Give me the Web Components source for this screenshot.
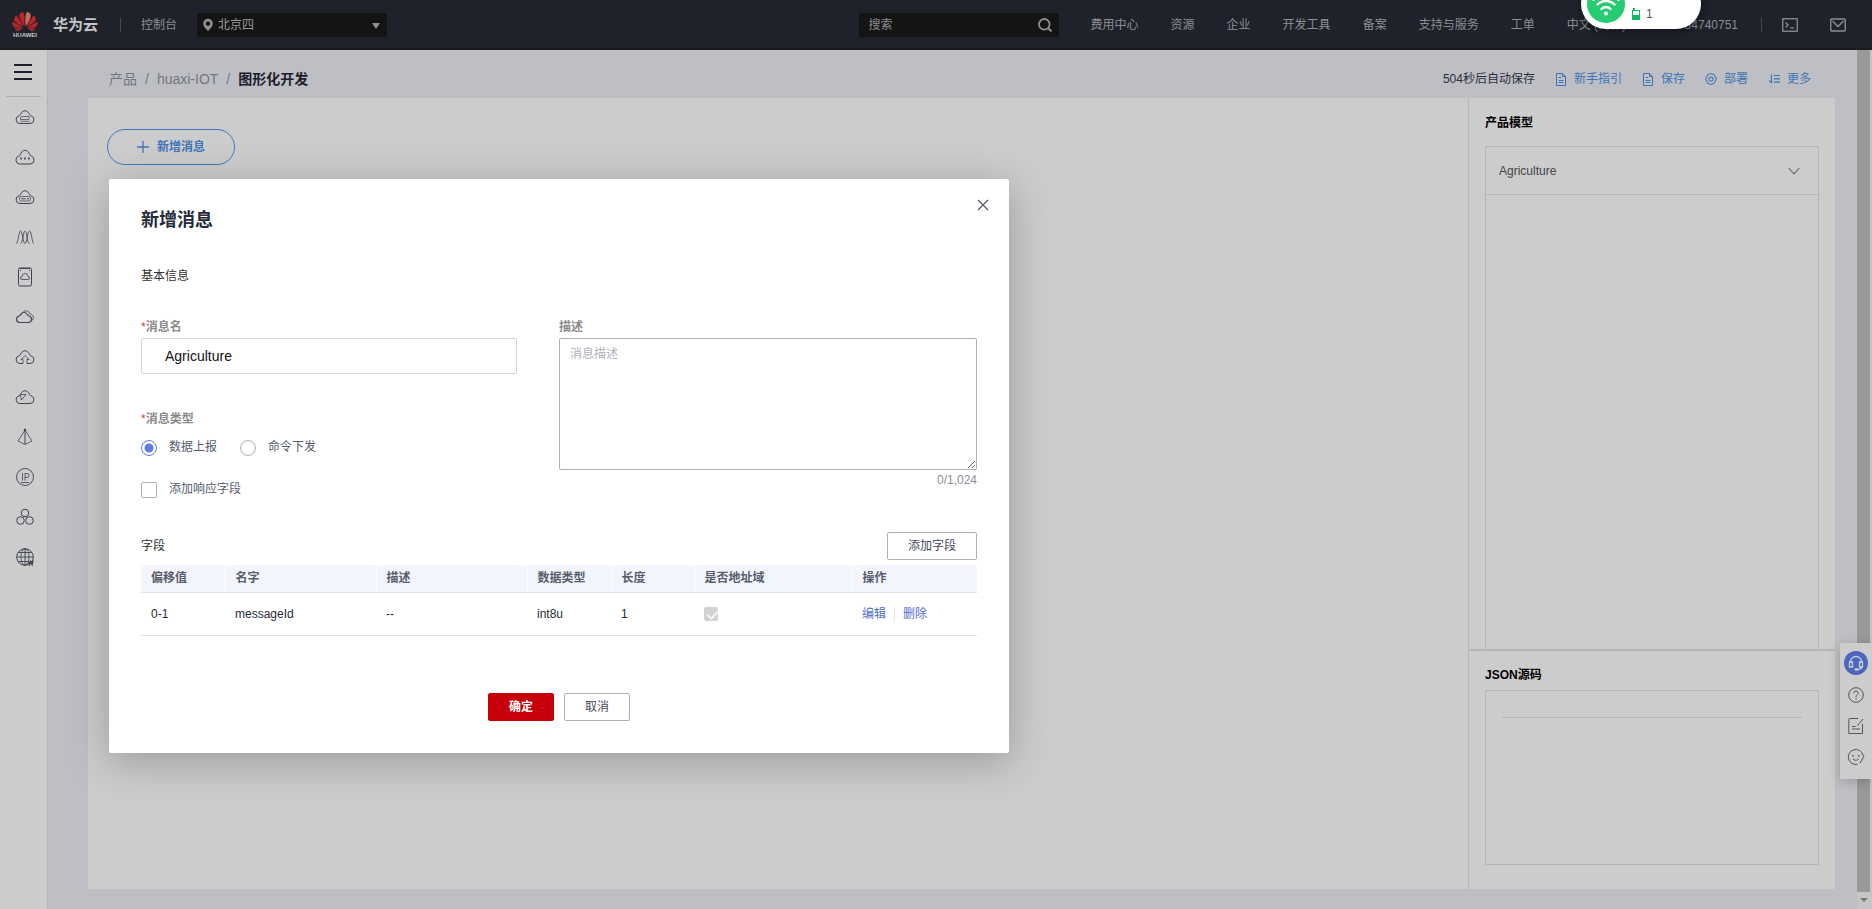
<!DOCTYPE html>
<html lang="zh-CN">
<head>
<meta charset="utf-8">
<title>图形化开发 - 华为云</title>
<style>
html, body { margin: 0; height: 100%; }
body {
  font: 12px/18px "Liberation Sans", "Noto Sans CJK SC", sans-serif;
  color: #22242c;
  background: #bebfc4;
  overflow: hidden;
}
</style>
</head>
<body>
<iot-app></iot-app>

<script>
const ICONS = {
  huawei: ['0 2 24 20', '<g stroke="none"><path fill="#b8282b" d="M3.67 6.14S1.82 7.91 1.72 9.78v.35c.08 1.51 1.22 2.4 1.22 2.4 1.83 1.79 6.26 4.04 7.3 4.55 0 0 .06.03.1-.01l.02-.04v-.04C7.52 10.8 3.67 6.14 3.67 6.14zM9.65 18.6c-.02-.08-.1-.08-.1-.08l-7.38.26c.8 1.43 2.15 2.53 3.56 2.2.96-.25 3.16-1.78 3.88-2.3.06-.05.04-.09.04-.09zm.08-.78C6.49 15.63.21 12.28.21 12.28c-.15.46-.2.9-.21 1.3v.07c0 1.07.4 1.82.4 1.82.8 1.69 2.34 2.2 2.34 2.2.7.3 1.4.31 1.4.31.12.02 4.4 0 5.54 0 .05 0 .08-.05.08-.05v-.06c0-.03-.03-.05-.03-.05zM9.06 3.19a3.42 3.42 0 00-2.57 3.15v.41c.03.6.16 1.05.16 1.05.66 2.9 3.86 7.65 4.55 8.65.05.05.1.03.1.03a.1.1 0 00.06-.1c1.06-10.6-1.11-13.42-1.11-13.42-.32.02-1.19.23-1.19.23z"/><path fill="#c8705c" d="M17.359 5.46s-.49-1.8-2.44-2.28c0 0-.57-.14-1.17-.22 0 0-2.18 2.81-1.12 13.43.01.07.06.08.06.08.07.03.1-.03.1-.03.72-1.03 3.9-5.76 4.55-8.64 0 0 .36-1.4.02-2.34z"/><path fill="#b8282b" d="M14.439 18.53s-.07 0-.09.05c0 0-.01.07.03.1.7.51 2.85 2 3.88 2.3 0 0 .16.05.43.06h.14c.69-.02 1.9-.37 3-2.26l-7.4-.25zm7.83-8.41c.14-2.06-1.94-3.97-1.94-3.98 0 0-3.85 4.66-6.67 10.8 0 0-.03.08.02.13l.04.01h.06c1.06-.53 5.46-2.77 7.28-4.54 0 0 1.15-.93 1.21-2.42zm1.52 2.14s-6.28 3.37-9.52 5.55c0 0-.05.04-.03.11 0 0 .03.06.07.06 1.16 0 5.56 0 5.67-.02 0 0 .57-.02 1.27-.29 0 0 1.56-.5 2.37-2.27 0 0 .73-1.45.17-3.14z"/></g>'],
  pin: ['0 0 10 14', '<path fill="currentColor" stroke="none" fill-rule="evenodd" d="M5 .8a4.800 4.800 0 0 1 4.800 4.800C9.800 8.800 6.600 11.200 5 13.200 3.400 11.200.2 8.800.2 5.600A4.800 4.800 0 0 1 5 .8zM5 3.400a2.200 2.200 0 1 0 0 4.400 2.200 2.200 0 0 0 0-4.400z"/>'],
  search: ['0 0 14 14', '<circle cx="6.300" cy="6.300" r="5.300" stroke-width="1.800"/><path stroke-width="2" d="M10.200 10.200 13.400 13.400"/>'],
  terminal: ['0 0 16 14', '<rect x=".75" y=".75" width="14.500" height="12.500" stroke-width="1.300"/><path stroke-width="1.300" d="M3.500 4.500 6 7 3.500 9.500M8 9.800h4"/>'],
  mail: ['0 0 16 14', '<rect x=".75" y="1" width="14.500" height="12" rx="1" stroke-width="1.400"/><path stroke-width="1.400" d="M2.500 3 8 8.500 13.500 3"/>'],
  menu: ['0 0 18 18', '<path stroke-width="2" d="M0 2h18M0 9h18M0 16h18"/>'],
  plus: ['0 0 12 12', '<path stroke-width="1.300" d="M6 0v12M0 6h12"/>'],
  close: ['0 0 12 12', '<path stroke-width="1.300" d="M1 1l10 10M11 1 1 11"/>'],
  chevron: ['0 0 12 8', '<path d="M.5 .8 6 7l5.500-6.200"/>'],
  doc: ['0 0 12 13', '<path d="M1.500.5h6l3 3v9h-9zM7.500.5v3h3M3.500 4.500H6M3.500 7.500h5M3.500 9.500h5"/>'],
  gear: ['0 0 14 14', '<path stroke-width="1.200" d="M4.500 1.500c.8 0 1.500-.8 2.500-.8s1.700.8 2.500.8 1.800.8 2 1.800.3 1.500 1 2.200c.7.700.7 2.300 0 3s-.8 1.200-1 2.200-1.200 1.800-2 1.800-1.500.8-2.500.8-1.700-.8-2.500-.8-1.800-.8-2-1.800-.3-1.500-1-2.200-.7-2.300 0-3 .8-1.200 1-2.200 1.200-1.800 2-1.800z"/><circle cx="7" cy="7" r="2.400" stroke-width="1.200"/>'],
  sort: ['0 0 12 12', '<path stroke-width="1.200" d="M3.500 1.500v8L1 7.800M6 2.500h6M6 5.800h6M6 9.200h6"/>'],
  cloudDrive: ['0 0 20 16', '<path d="M5 14.500a3.900 3.900 0 0 1-.9-7.700C5.800 6.500 6 1.800 10 1.800s4.200 4.700 5.900 5A3.900 3.900 0 0 1 15 14.500z"/><path stroke-width=".7" d="M7 7.500h7v3H5.500v-2zM5.500 12.300h9"/>'],
  cloudDots: ['0 0 20 16', '<path d="M4.700 15a4.100 4.100 0 0 1-.9-8C5.800 6.500 5.800 1.300 10 1.300s4.200 5.200 6.200 5.700a4.100 4.100 0 0 1-.9 8z"/><path stroke-width="1.800" d="M5.300 9.500h1.600M9.200 9.500h1.600M13.100 9.500h1.600"/>'],
  cloudServer: ['0 0 20 16', '<path d="M5 14.500a3.900 3.900 0 0 1-.9-7.700C5.800 6.500 6 1.800 10 1.800s4.200 4.700 5.900 5A3.900 3.900 0 0 1 15 14.500z"/><rect x="4.500" y="7.500" width="11" height="4.500" rx="1.500" stroke-width=".7"/><path d="M6.500 9.800h4M12 9.800h2"/>'],
  wave: ['0 0 20 16', '<path stroke-width=".8" d="M1 14.500c2.500 0 2.500-12.500 4.500-12.500S8 14.500 10 14.500 12.500 2 14.500 2 17 14.500 19 14.500M5.500 14.500C8 14.500 8 2 10 2s2 12.500 4.500 12.500"/>'],
  device: ['0 0 20 20', '<rect x="3.500" y="1" width="13" height="18" rx="1.500"/><path d="M5 1.500h10M5 3.500h1M14 3.500h1"/><path stroke-width=".8" d="M7 12.500a1.500 1.500 0 0 1 0-3 3 3 0 0 1 6 0 1.500 1.500 0 0 1 0 3z"/>'],
  clouds: ['0 0 20 16', '<path stroke-width="1.100" d="M4.500 13.500a3.300 3.300 0 0 1-.3-6.500C6 6.500 6 3.300 9 3.300s3.500 3.200 5 3.700a3.300 3.300 0 0 1-.5 6.500z"/><path stroke-width=".8" d="M8.500 2.500a4.500 4.500 0 0 1 6.800 2.700c2.300.2 3.600 2.300 3 4.300-.3 1.200-1 2-2 2.300"/>'],
  cloudUp: ['0 0 20 16', '<path d="M8 14.500H5a3.900 3.900 0 0 1-.9-7.700C5.800 6.500 6 1.800 10 1.800s4.200 4.700 5.900 5A3.900 3.900 0 0 1 15 14.500h-3"/><path stroke-width=".8" d="M8 14.500v-4H6l4-4 4 4h-2v4"/>'],
  cloudArrow: ['0 0 20 16', '<path d="M5 14.500a3.900 3.900 0 0 1-.9-7.700C5.800 6.500 6 1.800 10 1.800s4.200 4.700 5.900 5A3.900 3.900 0 0 1 15 14.500z"/><path stroke-width=".8" d="M5 5.500h6L6.500 11z"/>'],
  pyramid: ['0 0 20 18', '<path stroke-width=".8" d="M10 2 3 13l7 3.500 7-3.500z"/><path d="M10 1v15"/><circle cx="10" cy="2" r="1.200" fill="currentColor" stroke="none"/>'],
  ip: ['0 0 20 20', '<circle cx="10" cy="10" r="8.500" stroke-width=".9"/><path stroke-width=".8" d="M7.500 6v7.500M10 13.500v-7h2a2 2 0 0 1 0 4h-2M6 15.500h8"/>'],
  cubes: ['0 0 20 20', '<circle cx="10" cy="6" r="3.800"/><circle cx="5.500" cy="13.500" r="3.800"/><circle cx="14.500" cy="13.500" r="3.800"/>'],
  globe: ['0 0 20 20', '<circle cx="10" cy="10" r="8.300"/><ellipse cx="10" cy="10" rx="4" ry="8.300" stroke-width=".8"/><path stroke-width=".9" d="M10 1.700v16.600M1.700 10h16.600M3 5.500h14M3 14.500h10"/><path stroke-width="1.400" d="m13.500 13.500 1 4 1.300-3 1.300 3 1-4"/>'],
  headset: ['0 0 24 24', '<circle cx="12" cy="12" r="12" fill="#4c66b9" stroke="none"/><path d="M6.500 11.500V11a5.500 5.500 0 0 1 11 0v.5M5.500 11h3v5h-3zM15.500 11h3v5h-3zM17.500 16c0 2-2 2.500-4 2.500" stroke="#c9cfe0" stroke-width="1.300"/><ellipse cx="12.500" cy="18.500" rx="2" ry="1.200" fill="#c9cfe0" stroke="none"/>'],
  help: ['0 0 18 18', '<circle cx="9" cy="9" r="7.300"/><path d="M6.800 7.200a2.200 2.200 0 1 1 3.400 1.900c-.8.5-1.200.9-1.200 1.900M9 12v1.500"/>'],
  note: ['0 0 18 18', '<path d="M11 1.500H2.800a1 1 0 0 0-1 1v14h13.700V7M5 9.500h3.500M5 12h8M10.500 8.500l5.500-6.500"/>'],
  smile: ['0 0 18 18', '<path d="M10.500 16.300A7.500 7.500 0 1 1 16 7l.8 1.500L13 15.300M5.800 10.800a3.800 3.800 0 0 0 6 0"/><path stroke-width="1.500" d="M5.300 7.800h1.500M11 7.800h1.500"/>'],
  wifi: ['0 0 38 38', '<circle cx="19" cy="19" r="19" fill="#26cc72" stroke="none"/><g stroke="#fff" stroke-width="2.400" stroke-linecap="round"><path d="M14.500 24a6.200 6.200 0 0 1 9 0M10.500 19.500a12 12 0 0 1 17 0M6.500 15a18 18 0 0 1 25 0"/></g><circle cx="19" cy="28.500" r="2" fill="#fff" stroke="none"/>'],
  battery: ['0 0 8 12', '<path fill="#0cbd66" stroke="none" d="M1 0h2v2h5v10H0V2h1z"/><path fill="#fff" stroke="none" d="M1 3h6v4H1z"/>']
};

customElements.define('ui-icon', class extends HTMLElement {
  connectedCallback() {
    const [box, body] = ICONS[this.getAttribute('name')];
    const [, , w, h] = box.split(' ');
    const root = this.shadowRoot || this.attachShadow({ mode: 'open' });
    root.innerHTML = `<style>:host{display:inline-flex;flex:none}svg{display:block}</style>
      <svg width="${this.getAttribute('w') || w}" height="${this.getAttribute('h') || h}" viewBox="${box}" fill="none" stroke="currentColor" aria-hidden="true">${body}</svg>`;
  }
});

/* Registers an element whose shadow root is cloned from a template. */
function define(name, css, html) {
  const t = document.createElement('template');
  t.innerHTML = `<style>*{box-sizing:border-box}${css}</style>${html}`;
  customElements.define(name, class extends HTMLElement {
    constructor() {
      super();
      this.attachShadow({ mode: 'open' }).append(t.content.cloneNode(true));
    }
  });
}

define('top-bar', `
  :host { display: block; color: #8c8e93; background: #1f222a; box-shadow: inset 0 -2px #191b21; }
  header { display: flex; align-items: center; height: 50px; padding: 0 26px 0 12px; }
  a { color: inherit; text-decoration: none; white-space: nowrap; }
  .logo { display: flex; flex-direction: column; align-items: center; width: 26px; font: bold 6px/7px "Liberation Sans", sans-serif; color: #c8c8c8; }
  .brand { margin: 0 22px 0 15px; font-size: 15px; font-weight: bold; color: #c4c5c7; }
  .rule { flex: none; width: 1px; height: 14px; background: #44474e; }
  .console { margin: 0 20px; }
  .region, .search { display: flex; align-items: center; height: 24px; background: #141414; border-radius: 2px; }
  .region { width: 190px; padding-left: 6px; }
  select { flex: 1; height: 24px; padding: 0 5px; border: 0; appearance: none; background: none; color: #96989c; font: inherit; }
  .region::after { content: ""; margin: 2px 7px 0 0; border: 4px solid transparent; border-top: 6px solid #8c8e93; border-bottom: 0; }
  .search { width: 200px; margin-left: auto; padding: 0 7px 0 10px; }
  input { flex: 1; min-width: 0; height: 24px; padding: 0; border: 0; outline: 0; background: none; font: inherit; color: inherit; }
  input::placeholder { color: #8c8e93; opacity: 1; }
  nav { display: flex; gap: 32px; margin-left: 32px; }
  .account { width: 112px; margin-right: 23px; text-align: right; }
  .tool { margin-left: 32px; line-height: 0; }
  .rule + .tool { margin-left: 20px; }
`, `
  <header>
    <a class="logo" href="#"><ui-icon name="huawei" w="26" h="21"></ui-icon>HUAWEI</a>
    <a class="brand" href="#">华为云</a><span class="rule"></span>
    <a class="console" href="#">控制台</a>
    <div class="region"><ui-icon name="pin"></ui-icon><select aria-label="区域"><option>北京四</option></select></div>
    <div class="search"><input type="text" aria-label="搜索" placeholder="搜索"><ui-icon name="search"></ui-icon></div>
    <nav>
      <a href="#">费用中心</a><a href="#">资源</a><a href="#">企业</a><a href="#">开发工具</a><a href="#">备案</a><a href="#">支持与服务</a><a href="#">工单</a><a href="#">中文 (简体)</a>
    </nav>
    <a class="account" href="#">84740751</a><span class="rule"></span>
    <a class="tool" href="#" aria-label="命令行"><ui-icon name="terminal"></ui-icon></a>
    <a class="tool" href="#" aria-label="消息"><ui-icon name="mail"></ui-icon></a>
  </header>
`);

define('wifi-pill', `
  :host { position: absolute; top: -21px; right: 171px; z-index: 3; display: flex; align-items: center; width: 120px; height: 50px; padding-left: 6px; border-radius: 25px; background: #fff; box-shadow: 0 3px 8px rgba(0,0,0,.4); color: #555; }
  div { display: flex; align-items: center; gap: 6px; margin: 20px 0 0 7px; }
`, `<ui-icon name="wifi"></ui-icon><div><ui-icon name="battery"></ui-icon><span>1</span></div>`);

const RAIL_LINKS = [
  ['cloudDrive', '云硬盘'], ['cloudDots', '云服务'], ['cloudServer', '弹性云服务器'], ['wave', '弹性伸缩'],
  ['device', '设备接入'], ['clouds', '云容器'], ['cloudUp', '对象存储'], ['cloudArrow', '数据复制'],
  ['pyramid', '虚拟私有云'], ['ip', '弹性公网'], ['cubes', '区块链'], ['globe', '域名']
];

define('side-rail', `
  :host { display: flex; flex-direction: column; width: 48px; background: #ccc; border-right: 1px solid #b4b4b8; color: #3f4350; }
  button { display: flex; align-items: center; justify-content: center; width: 100%; height: 46px; padding: 0 1px 2px 0; border: 0; background: none; color: #1c1f2b; }
  nav { display: flex; flex-direction: column; margin: 0 6px; border-top: 1px solid #aeb0b4; }
  a { display: flex; align-items: center; justify-content: center; height: 40px; padding-left: 3px; color: inherit; }
`, `
  <button aria-label="菜单"><ui-icon name="menu"></ui-icon></button>
  <nav>${RAIL_LINKS.map(([icon, label]) => `<a href="#" aria-label="${label}"><ui-icon name="${icon}"></ui-icon></a>`).join('')}</nav>
`);

define('tool-link', `
  :host { display: block; }
  a { display: flex; align-items: center; gap: 7px; color: #3f75b5; text-decoration: none; }
`, `<a href="#"><slot name="icon"></slot><slot></slot></a>`);

define('crumb-bar', `
  :host { display: flex; align-items: center; justify-content: space-between; height: 48px; padding: 10px 24px 0 21px; }
  nav { display: flex; gap: 8px; font-size: 14px; color: #74767d; }
  nav a { color: inherit; text-decoration: none; }
  b { color: #1d202b; }
  .tools { display: flex; align-items: center; gap: 20px; color: #2c2f3a; }
`, `
  <nav><a href="#">产品</a><span>/</span><a href="#">huaxi-IOT</a><span>/</span><b>图形化开发</b></nav>
  <div class="tools"><span>504秒后自动保存</span>
    <tool-link><ui-icon slot="icon" name="doc"></ui-icon>新手指引</tool-link>
    <tool-link><ui-icon slot="icon" name="doc"></ui-icon>保存</tool-link>
    <tool-link><ui-icon slot="icon" name="gear" w="12" h="12"></ui-icon>部署</tool-link>
    <tool-link><ui-icon slot="icon" name="sort"></ui-icon>更多</tool-link>
  </div>
`);

define('model-panel', `
  :host { display: flex; flex-direction: column; width: 367px; border-left: 1px solid #b6b6b6; color: #000; }
  section { display: flex; flex-direction: column; padding: 0 16px; }
  .model { flex: 1; padding-top: 16px; border-bottom: 2px solid #b6b6b6; }
  .json { padding-top: 15px; padding-bottom: 24px; }
  h2 { margin: 0; font-size: 12px; line-height: 18px; }
  .tree { flex: 1; margin-top: 14px; border: 1px solid #b6b6b6; border-bottom: 0; }
  button { display: flex; align-items: center; justify-content: space-between; width: 100%; height: 48px; padding: 0 18px 0 13px; border: 0; border-bottom: 1px solid #b6b6b6; background: none; font: inherit; color: #444; }
  .code { height: 175px; margin-top: 6px; padding: 26px 16px 0; border: 1px solid #b6b6b6; }
  hr { margin: 0; border: 0; border-top: 1px solid #b6b6b6; }
`, `
  <section class="model"><h2>产品模型</h2><div class="tree"><button>Agriculture<ui-icon name="chevron"></ui-icon></button></div></section>
  <section class="json"><h2>JSON源码</h2><div class="code"><hr></div></section>
`);

define('work-area', `
  :host { display: flex; background: #ccc; }
  .canvas { flex: 1; padding: 31px 19px; }
  button { display: flex; align-items: center; justify-content: center; gap: 8px; width: 128px; height: 36px; padding: 0; border: 1px solid #3f78bd; border-radius: 18px; background: none; color: #3f75b5; font: inherit; font-weight: bold; }
`, `
  <div class="canvas"><button><ui-icon name="plus"></ui-icon>新增消息</button></div>
  <model-panel></model-panel>
`);

define('help-dock', `
  :host { position: absolute; right: 0; bottom: 130px; z-index: 2; display: flex; flex-direction: column; align-items: center; width: 32px; height: 136px; padding-top: 8px; background: #ccc; box-shadow: 0 2px 12px rgba(0,0,0,.2); color: #53555f; }
  a { display: flex; align-items: center; justify-content: center; height: 31px; color: inherit; }
  .service { height: 24px; margin-bottom: 4px; }
`, `
  <a class="service" href="#" aria-label="客服"><ui-icon name="headset"></ui-icon></a>
  <a href="#" aria-label="帮助"><ui-icon name="help"></ui-icon></a>
  <a href="#" aria-label="建议"><ui-icon name="note"></ui-icon></a>
  <a href="#" aria-label="评价"><ui-icon name="smile"></ui-icon></a>
`);

define('page-scroll', `
  :host { display: flex; flex-direction: column; align-items: flex-start; width: 15px; background: #c5c5c7; }
  .thumb { flex: 1; width: 13px; background: #999; }
  .arrow { margin: 6px 0 7px 3px; border: 4px solid transparent; border-top-color: #777; border-bottom: 0; }
`, `<div class="thumb"></div><div class="arrow"></div>`);

define('field-table', `
  :host { display: block; }
  table { width: 100%; table-layout: fixed; border-collapse: collapse; }
  th, td { padding: 0 10px; text-align: left; border-bottom: 1px solid #dfe1e6; }
  th { height: 27px; background: #f2f5fc; color: #575d6c; border-right: 1px solid #fff; }
  th:last-child { border-right: 0; }
  td { height: 43px; color: #252b3a; }
  .short { width: 84px; }
  .long { width: 151px; }
  .flag { width: 158px; }
  .length { width: 83px; }
  input { display: block; width: 14px; height: 14px; margin: 0; appearance: none; border-radius: 2px; background: #d2d2d2; }
  input::after { content: ""; display: block; width: 5px; height: 9px; margin: 0 0 0 5px; border: solid #f4f4f4; border-width: 0 2px 2px 0; transform: translateY(1px) rotate(42deg); }
  .ops { display: flex; align-items: center; gap: 8px; }
  a { color: #526ecc; text-decoration: none; }
  i { width: 1px; height: 14px; background: #dfe1e6; }
`, `
  <table>
    <colgroup><col class="short"><col class="long"><col class="long"><col class="short"><col class="length"><col class="flag"><col></colgroup>
    <thead><tr><th>偏移值</th><th>名字</th><th>描述</th><th>数据类型</th><th>长度</th><th>是否地址域</th><th>操作</th></tr></thead>
    <tbody><tr><td>0-1</td><td>messageId</td><td>--</td><td>int8u</td><td>1</td><td><input type="checkbox" aria-label="是否地址域" checked disabled></td><td><div class="ops"><a href="#">编辑</a><i></i><a href="#">删除</a></div></td></tr></tbody>
  </table>
`);

define('message-dialog', `
  :host { position: absolute; left: 109px; top: 179px; z-index: 1; display: block; width: 900px; padding: 29px 32px 32px; background: #fff; border-radius: 2px; box-shadow: 0 8px 40px rgba(0,0,0,.25); color: #575d6c; }
  h1 { margin: 0; font-size: 18px; line-height: 24px; color: #252b3a; }
  h3 { margin: 0; font-size: 12px; line-height: 18px; font-weight: normal; color: #333; }
  .close { position: absolute; right: 14px; top: 14px; display: flex; align-items: center; justify-content: center; width: 24px; height: 24px; padding: 0; border: 0; background: none; color: #575d6c; }
  .basic { margin: 35px 0 33px; }
  .form { display: grid; grid-template-columns: 376px 1fr; column-gap: 42px; }
  .label { display: block; margin-bottom: 2px; font-weight: bold; color: #8a8a8a; }
  .label em { font-style: normal; font-weight: normal; color: #e03a3e; }
  #name { display: block; width: 100%; height: 36px; margin-bottom: 36px; padding: 0 23px; border: 1px solid #d3d3d6; border-radius: 2px; font: inherit; font-size: 14px; color: #111; }
  fieldset { margin: 0; padding: 0; border: 0; }
  legend { padding: 0; }
  .choices { display: flex; gap: 23px; padding-top: 8px; }
  .choice { display: flex; align-items: center; gap: 12px; }
  .choice input { flex: none; width: 16px; height: 16px; margin: 2px 0 0; appearance: none; background: #fff; border: 1px solid #adb0b8; border-radius: 2px; }
  .choice input[type=radio] { border-radius: 50%; }
  .choice input[type=radio]:checked { border-color: #5e7ce0; background: radial-gradient(circle, #5e7ce0 4px, #fff 5px); }
  .response { margin-top: 24px; }
  textarea { display: block; width: 100%; height: 132px; padding: 6px 10px; border: 1px solid #adb0b8; border-radius: 2px; font: inherit; resize: vertical; }
  textarea::placeholder { color: #adb0b8; opacity: 1; }
  .count { display: block; text-align: right; margin-top: 1px; color: #8a8e99; }
  .fields { display: flex; align-items: center; justify-content: space-between; margin: 34px 0 5px; }
  .btn { height: 28px; min-width: 66px; padding: 0 20px; border: 1px solid #adb0b8; border-radius: 2px; background: #fff; font: inherit; color: #454b58; }
  .primary { border-color: #c7000b; background: #c7000b; color: #fff; font-weight: bold; }
  footer { display: flex; justify-content: center; gap: 10px; margin-top: 57px; }
`, `
  <h1>新增消息</h1>
  <button class="close" aria-label="关闭"><ui-icon name="close"></ui-icon></button>
  <h3 class="basic">基本信息</h3>
  <div class="form">
    <div>
      <label class="label" for="name"><em>*</em>消息名</label>
      <input id="name" type="text" value="Agriculture">
      <fieldset>
        <legend class="label"><em>*</em>消息类型</legend>
        <div class="choices">
          <label class="choice"><input type="radio" name="kind" checked>数据上报</label>
          <label class="choice"><input type="radio" name="kind">命令下发</label>
        </div>
      </fieldset>
      <label class="choice response"><input type="checkbox">添加响应字段</label>
    </div>
    <div>
      <label class="label" for="desc">描述</label>
      <textarea id="desc" placeholder="消息描述"></textarea>
      <span class="count">0/1,024</span>
    </div>
  </div>
  <div class="fields"><h3>字段</h3><button class="btn">添加字段</button></div>
  <field-table></field-table>
  <footer><button class="btn primary">确定</button><button class="btn">取消</button></footer>
`);

define('iot-app', `
  :host { position: relative; display: flex; flex-direction: column; min-height: 100vh; overflow: hidden; }
  .body { flex: 1; display: flex; }
  main { flex: 1; display: flex; flex-direction: column; padding: 0 22px 20px 40px; }
  work-area { flex: 1; }
`, `
  <top-bar></top-bar>
  <wifi-pill></wifi-pill>
  <div class="body">
    <side-rail></side-rail>
    <main><crumb-bar></crumb-bar><work-area></work-area></main>
    <page-scroll></page-scroll>
  </div>
  <message-dialog role="dialog" aria-label="新增消息"></message-dialog>
  <help-dock></help-dock>
`);
</script>
</body>
</html>
